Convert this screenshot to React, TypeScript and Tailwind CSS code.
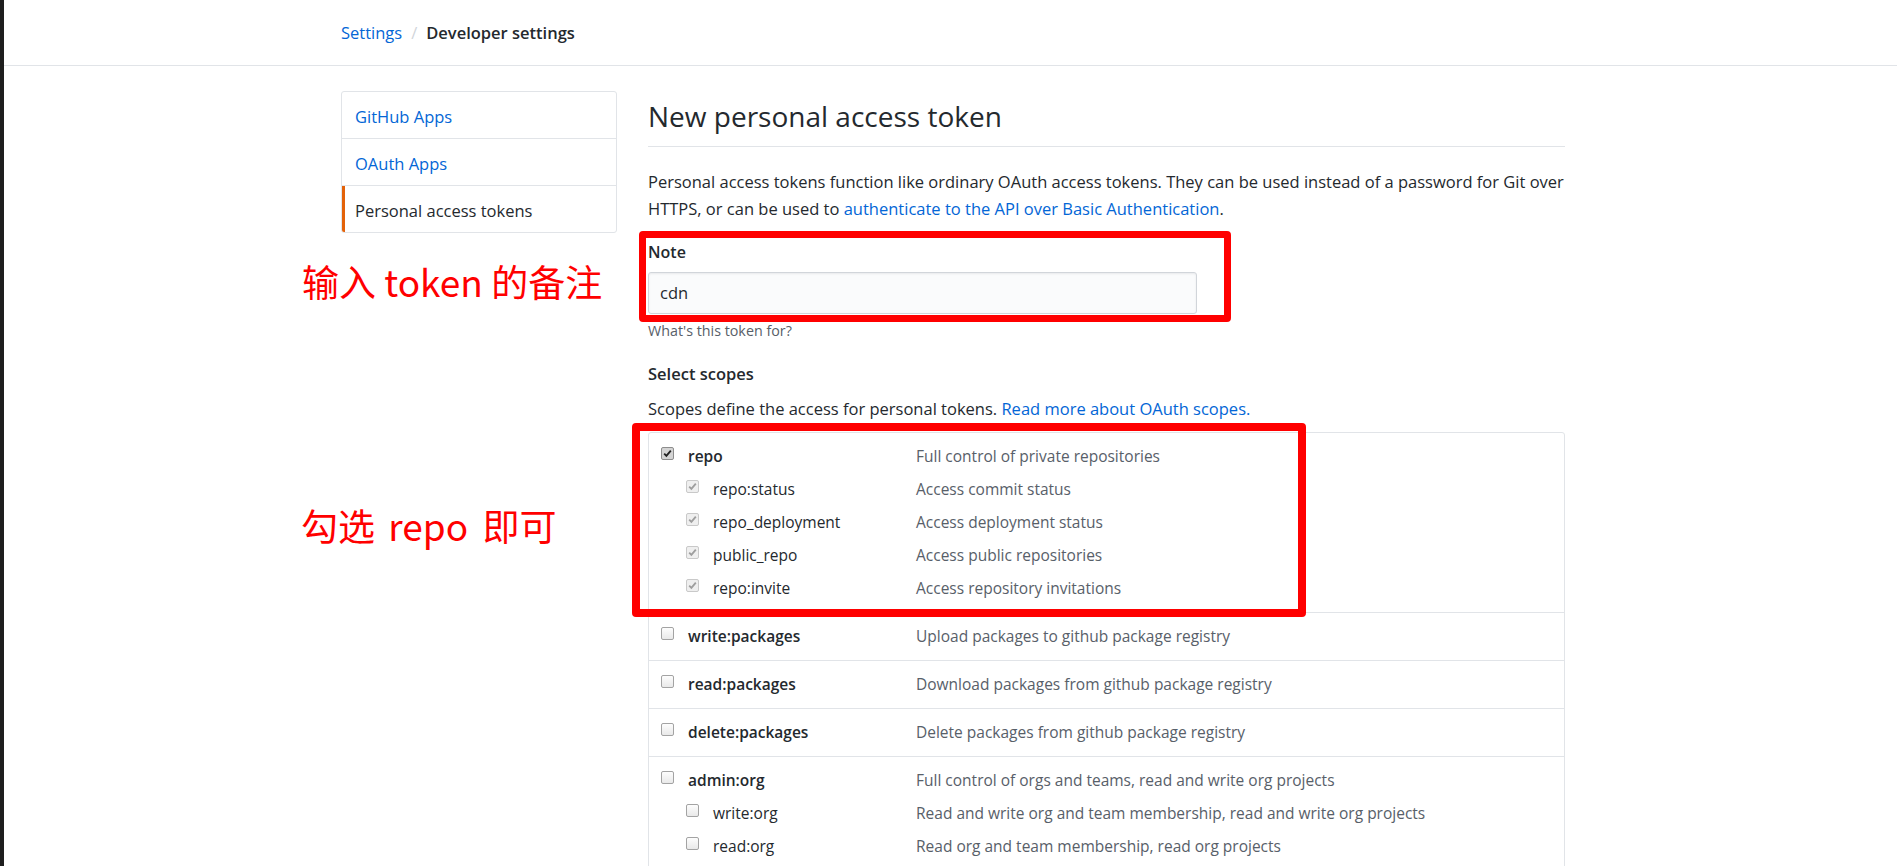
import React from "react";

type BoxState = "on" | "dim" | "off";

interface Scope {
  name: string;
  desc: string;
  state: BoxState;
  sub?: boolean;
}

const groups: Scope[][] = [
  [
    { name: "repo", desc: "Full control of private repositories", state: "on" },
    { name: "repo:status", desc: "Access commit status", state: "dim", sub: true },
    { name: "repo_deployment", desc: "Access deployment status", state: "dim", sub: true },
    { name: "public_repo", desc: "Access public repositories", state: "dim", sub: true },
    { name: "repo:invite", desc: "Access repository invitations", state: "dim", sub: true },
  ],
  [{ name: "write:packages", desc: "Upload packages to github package registry", state: "off" }],
  [{ name: "read:packages", desc: "Download packages from github package registry", state: "off" }],
  [{ name: "delete:packages", desc: "Delete packages from github package registry", state: "off" }],
  [
    { name: "admin:org", desc: "Full control of orgs and teams, read and write org projects", state: "off" },
    { name: "write:org", desc: "Read and write org and team membership, read and write org projects", state: "off", sub: true },
    { name: "read:org", desc: "Read org and team membership, read org projects", state: "off", sub: true },
  ],
];

function CheckBox({ state }: { state: BoxState }) {
  if (state === "off") {
    return (
      <span className="mb-[6px] block w-[13px] h-[13px] shrink-0 rounded-[2px] border border-[#a3a3a3] bg-gradient-to-b from-[#fdfdfd] to-[#e9e9e9]" />
    );
  }
  const on = state === "on";
  return (
    <span
      className={
        on
          ? "mb-[6px] flex items-center justify-center w-[13px] h-[13px] shrink-0 rounded-[2px] border border-[#8d8d8d] bg-[#d4d4d4]"
          : "mb-[6px] flex items-center justify-center w-[13px] h-[13px] shrink-0 rounded-[2px] border border-[#c9c9c9] bg-[#efefef]"
      }
    >
      <svg width="9" height="9" viewBox="0 0 9 9">
        <path
          d="M1.2 4.6 L3.4 6.9 L7.8 1.6"
          fill="none"
          stroke={on ? "#222" : "#9e9e9e"}
          strokeWidth="1.8"
        />
      </svg>
    </span>
  );
}

function ScopeRow({ scope }: { scope: Scope }) {
  return (
    <div className="flex items-center h-[33px]">
      <div
        className={
          scope.sub
            ? "flex items-center w-[267px] pl-[37px] gap-[14px]"
            : "flex items-center w-[267px] pl-[12px] gap-[14px]"
        }
      >
        <CheckBox state={scope.state} />
        <span className={scope.sub ? "text-[#24292e]" : "text-[#24292e] font-semibold"}>
          {scope.name}
        </span>
      </div>
      <span className="text-[#586069]">{scope.desc}</span>
    </div>
  );
}

export default function App() {
  return (
    <div
      className="flex h-[866px] overflow-hidden bg-white text-[15.5px] text-[#24292e]"
      style={{ fontFamily: '"Open Sans", "Noto Sans", sans-serif' }}
    >
      <div className="w-[4px] shrink-0 bg-[#1e1e1e]" />
      <div className="relative flex-1">
        {/* breadcrumb */}
        <div className="flex items-center h-[66px] pt-[2px] pl-[337px] border-b border-[#e1e4e8] text-[16.5px]">
          <a className="text-[#0366d6]">Settings</a>
          <span className="mx-[9px] text-[#d1d5da]">/</span>
          <span className="font-semibold">Developer settings</span>
        </div>

        <div className="flex pl-[337px] pt-[25px] gap-[31px]">
          {/* sidebar */}
          <nav className="w-[276px] shrink-0 self-start border border-[#e1e4e8] rounded-[3px] overflow-hidden text-[16.5px]">
            <div className="flex items-center h-[47px] pt-[5px] pl-[13px] border-b border-[#e1e4e8] text-[#0366d6]">
              GitHub Apps
            </div>
            <div className="flex items-center h-[47px] pt-[5px] pl-[13px] border-b border-[#e1e4e8] text-[#0366d6]">
              OAuth Apps
            </div>
            <div className="flex items-center h-[46px] pt-[5px] pl-[10px] border-l-[3px] border-[#e36209] text-[#24292e]">
              Personal access tokens
            </div>
          </nav>

          {/* main */}
          <main className="w-[917px] shrink-0">
            <div className="pt-[6px] pb-[11px] border-b border-[#e1e4e8]">
              <h1 className="text-[28px] leading-[38px] font-normal">New personal access token</h1>
            </div>
            <p className="mt-[21px] leading-[27px] text-[16.5px]">
              Personal access tokens function like ordinary OAuth access tokens. They can be used instead of a password for Git over
              <br />
              HTTPS, or can be used to{" "}
              <a className="text-[#0366d6]">authenticate to the API over Basic Authentication</a>.
            </p>

            <div className="mt-[17px] leading-[26px] font-semibold text-[16px]">Note</div>
            <div className="mt-[7px] w-[549px] h-[42px] flex items-center px-[11px] bg-[#fafbfc] border border-[#d1d5da] rounded-[3px] text-[16.5px] shadow-[inset_0_1px_2px_rgba(27,31,35,0.075)]">
              cdn
            </div>
            <div className="mt-[7px] text-[14.3px] leading-[20px] text-[#586069]">What's this token for?</div>

            <div className="mt-[20px] leading-[26px] font-semibold text-[16.5px]">Select scopes</div>
            <p className="mt-[8px] leading-[27px] text-[16.5px]">
              Scopes define the access for personal tokens.{" "}
              <a className="text-[#0366d6]">Read more about OAuth scopes.</a>
            </p>

            <div className="mt-[10px] border border-[#e1e4e8] rounded-t-[3px]">
              {groups.map((g, i) => (
                <div
                  key={i}
                  className={i > 0 ? "pt-[7px] pb-[7px] border-t border-[#e1e4e8]" : "pt-[7px] pb-[7px]"}
                >
                  {g.map((s) => (
                    <ScopeRow key={s.name} scope={s} />
                  ))}
                </div>
              ))}
            </div>
          </main>
        </div>

        {/* annotations */}
        <div className="absolute left-[635px] top-[231px] w-[592px] h-[91px] border-[7px] border-[#ff0000] rounded-[4px]" />
        <div className="absolute left-[628px] top-[423px] w-[674px] h-[194px] border-[8px] border-[#ff0000] rounded-[4px]" />
        <div
          className="absolute left-[298px] top-[259px] text-[37px] leading-[44px] text-[#ff0000] whitespace-nowrap"
          style={{ fontFamily: '"Noto Sans CJK SC", sans-serif' }}
        >
          输入 token 的备注
        </div>
        <div
          className="absolute left-[297px] top-[503px] text-[37px] leading-[44px] text-[#ff0000] whitespace-nowrap"
          style={{ fontFamily: '"Noto Sans CJK SC", sans-serif' }}
        >
          勾选<span className="ml-[5px] mr-[6px]"> repo </span>即可
        </div>
      </div>
    </div>
  );
}
